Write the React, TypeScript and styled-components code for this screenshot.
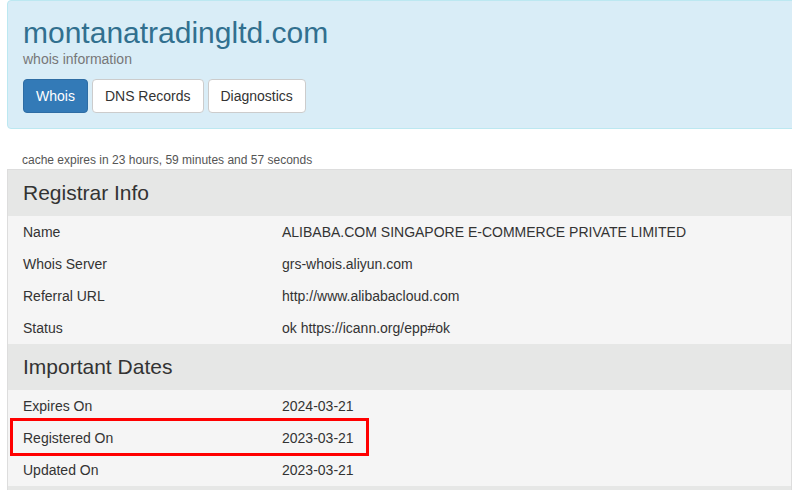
import React from "react";
import styled, { createGlobalStyle } from "styled-components";

const GlobalStyle = createGlobalStyle`
    html, body {
        margin: 0;
        padding: 0;
        background: #fff;
        overflow: hidden;
    }
    body {
        font-family: "Liberation Sans", Arial, sans-serif;
        font-size: 14px;
        line-height: 20px;
        color: #333;
    }
`;

const Page = styled.div`
    padding-left: 7px;
    width: 785px;
`;

const Banner = styled.div`
    background: #d9edf7;
    border: 1px solid #bce8f1;
    border-radius: 4px;
    padding: 16px 15px 15px;
    margin-right: -20px;
`;

const DomainTitle = styled.h1`
    margin: 0;
    font-size: 30px;
    font-weight: normal;
    line-height: 31px;
    color: #31708f;
`;

const Subtitle = styled.div`
    margin-top: 1px;
    color: #777;
`;

const Tabs = styled.div`
    display: flex;
    gap: 4px;
    margin-top: 10px;
`;

const TabButton = styled.button<{ $active?: boolean }>`
    font-family: inherit;
    font-size: 14px;
    line-height: 20px;
    padding: 6px 12px;
    border-radius: 4px;
    border: 1px solid ${(p) => (p.$active ? "#2e6da4" : "#ccc")};
    background: ${(p) => (p.$active ? "#337ab7" : "#fff")};
    color: ${(p) => (p.$active ? "#fff" : "#333")};
    cursor: pointer;
`;

const CacheNote = styled.div`
    font-size: 12px;
    line-height: 17px;
    color: #555;
    margin: 23px 0 0 15px;
`;

const Table = styled.div`
    border: 1px solid #ddd;
    border-bottom: none;
`;

const SectionHeader = styled.div`
    background: #e6e7e6;
    height: 46px;
    display: flex;
    align-items: center;
    padding: 0 15px;
    font-size: 21px;
`;

const Row = styled.div`
    position: relative;
    display: grid;
    grid-template-columns: 259px 1fr;
    height: 32px;
    align-items: center;
    padding: 0 15px;
    background: #f5f5f5;
`;

const Highlight = styled.div`
    position: absolute;
    z-index: 1;
    left: 2px;
    top: -4px;
    width: 353px;
    height: 32px;
    border: 3px solid #f00;
    pointer-events: none;
`;

type Entry = { label: string; value: string; marked?: boolean };

const sections: { title: string; rows: Entry[] }[] = [
    {
        title: "Registrar Info",
        rows: [
            { label: "Name", value: "ALIBABA.COM SINGAPORE E-COMMERCE PRIVATE LIMITED" },
            { label: "Whois Server", value: "grs-whois.aliyun.com" },
            { label: "Referral URL", value: "http://www.alibabacloud.com" },
            { label: "Status", value: "ok https://icann.org/epp#ok" },
        ],
    },
    {
        title: "Important Dates",
        rows: [
            { label: "Expires On", value: "2024-03-21" },
            { label: "Registered On", value: "2023-03-21", marked: true },
            { label: "Updated On", value: "2023-03-21" },
        ],
    },
    {
        // next section starts just below the fold
        title: "",
        rows: [],
    },
];

const App: React.FC = () => {
    return (
        <>
            <GlobalStyle />
            <Page>
                <Banner>
                    <DomainTitle>montanatradingltd.com</DomainTitle>
                    <Subtitle>whois information</Subtitle>
                    <Tabs>
                        <TabButton $active>Whois</TabButton>
                        <TabButton>DNS Records</TabButton>
                        <TabButton>Diagnostics</TabButton>
                    </Tabs>
                </Banner>
                <CacheNote>cache expires in 23 hours, 59 minutes and 57 seconds</CacheNote>
                <Table>
                    {sections.map((section, i) => (
                        <React.Fragment key={i}>
                            <SectionHeader>{section.title}</SectionHeader>
                            {section.rows.map((row) => (
                                <Row key={row.label}>
                                    <span>{row.label}</span>
                                    <span>{row.value}</span>
                                    {row.marked && <Highlight />}
                                </Row>
                            ))}
                        </React.Fragment>
                    ))}
                </Table>
            </Page>
        </>
    );
};

export default App;
